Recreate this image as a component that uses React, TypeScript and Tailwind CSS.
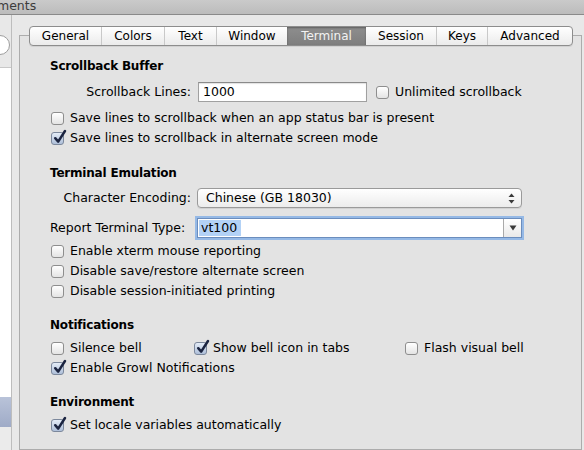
import React from 'react'

const TABS: { label: string; w: string }[] = [
  { label: 'General', w: 'w-[71px]' },
  { label: 'Colors', w: 'w-[63px]' },
  { label: 'Text', w: 'w-[52px]' },
  { label: 'Window', w: 'w-[71px]' },
  { label: 'Terminal', w: 'w-[79px]' },
  { label: 'Session', w: 'w-[70px]' },
  { label: 'Keys', w: 'w-[51px]' },
  { label: 'Advanced', w: 'w-[85px]' },
]

const SELECTED = 'Terminal'

function Check({ checked }: { checked?: boolean }) {
  return (
    <span
      className={
        checked
          ? 'relative inline-block w-[13px] h-[13px] shrink-0 rounded-[3px] border border-[#7c889c] bg-linear-to-b from-[#e4ecf7] to-[#aebfd9]'
          : 'relative inline-block w-[13px] h-[13px] shrink-0 rounded-[3px] border border-[#8e8e8e] bg-linear-to-b from-white to-[#e4e4e4]'
      }
    >
      {checked && (
        <svg className="absolute -top-[4px] left-[1px]" width="14" height="15" viewBox="0 0 14 15">
          <path
            d="M2.2 9.2 L5.2 12.6 L12 2"
            stroke="#1b2440"
            strokeWidth="2.5"
            fill="none"
            strokeLinecap="round"
            strokeLinejoin="round"
          />
        </svg>
      )}
    </span>
  )
}

function CheckRow({ label, checked, className = '' }: { label: string; checked?: boolean; className?: string }) {
  return (
    <div className={`h-[20px] flex items-center gap-[6px] pl-[1px] ${className}`}>
      <Check checked={checked} />
      <span>{label}</span>
    </div>
  )
}

function Header({ children, className = '' }: { children: React.ReactNode; className?: string }) {
  return <div className={`h-[16px] leading-[16px] font-bold text-[12px] tracking-[-0.2px] ${className}`}>{children}</div>
}

function TabStrip() {
  return (
    <div className="relative z-10 ml-[10px] flex h-[20px] w-fit rounded-[4px] border border-[#8d8d8d] bg-linear-to-b from-white to-[#ebebeb] shadow-[0_1px_0_rgba(0,0,0,0.08)] overflow-hidden text-[12px]">
      {TABS.map((t, i) => {
        const sel = t.label === SELECTED
        const prevSel = i > 0 && TABS[i - 1].label === SELECTED
        return (
          <div
            key={t.label}
            className={`${t.w} flex items-center justify-center leading-none ${
              sel
                ? 'bg-linear-to-b from-[#8e8e8e] to-[#7e7e7e] text-[#f3f3f3] shadow-[inset_0_1px_2px_rgba(0,0,0,0.35)]'
                : i > 0 && !prevSel
                ? 'border-l border-[#c9c9c9] text-black'
                : 'text-black'
            }`}
          >
            {t.label}
          </div>
        )
      })}
    </div>
  )
}

export default function App() {
  return (
    <div className="w-[584px] h-[450px] overflow-hidden flex flex-col bg-[#e8e8e8] font-['DejaVu_Sans','Liberation_Sans',sans-serif] text-[12.5px] text-black">
      {/* toolbar remnant */}
      <div className="h-[15px] shrink-0 border-b border-[#8a8a8a] bg-linear-to-b from-[#cacaca] to-[#bcbcbc] overflow-hidden">
        <div className="-ml-[3px] -mt-[2px] text-[12.5px] leading-[15px] text-[#3c3c3c]">ments</div>
      </div>

      <div className="flex flex-1 min-h-0">
        {/* left list pane */}
        <div className="w-[12px] shrink-0 flex flex-col border-r border-[#bdbdbd]">
          <div className="mt-[20px] h-[20px] w-[40px] -ml-[30px] rounded-full border border-[#9d9d9d] bg-white shrink-0" />
          <div className="mt-[12px] flex-1 flex flex-col border-t border-[#c8c8c8]">
            <div className="h-[329px] bg-white shrink-0" />
            <div className="h-[30px] shrink-0 bg-linear-to-b from-[#b9c3d9] to-[#9fabc7]" />
            <div className="flex-1 bg-[#ebebeb]" />
          </div>
        </div>

        {/* tab view */}
        <div className="ml-[7px] pt-[11px] flex flex-col">
          <TabStrip />
          <div className="-mt-[11px] w-[563px] flex-1 border border-[#acacac] bg-[#e3e3e3] pl-[30px] pt-[22px]">
            <Header>Scrollback Buffer</Header>
            <div className="mt-[8px] h-[20px] flex items-center">
              <span className="w-[141px] text-right">Scrollback Lines:</span>
              <div className="ml-[7px] w-[169px] h-[20px] border border-[#a0a0a0] border-t-[#8a8a8a] bg-white flex items-center pl-[4px] shadow-[inset_0_1px_1px_rgba(0,0,0,0.12)]">
                1000
              </div>
              <div className="ml-[9px] flex items-center gap-[6px]">
                <Check />
                <span>Unlimited scrollback</span>
              </div>
            </div>
            <CheckRow className="mt-[6px]" label="Save lines to scrollback when an app status bar is present" />
            <CheckRow checked label="Save lines to scrollback in alternate screen mode" />

            <Header className="mt-[17px]">Terminal Emulation</Header>
            <div className="mt-[7px] h-[20px] flex items-center">
              <span className="w-[141px] text-right">Character Encoding:</span>
              <div className="ml-[6px] w-[325px] h-[20px] rounded-[4px] border border-[#9a9a9a] bg-linear-to-b from-white to-[#ececec] shadow-[0_1px_0_rgba(0,0,0,0.08)] flex items-center pl-[8px] pr-[6px]">
                <span className="flex-1">Chinese (GB 18030)</span>
                <svg width="7" height="11" viewBox="0 0 7 11">
                  <path d="M3.5 0.5 L6.5 4 L0.5 4 Z" fill="#3a3a3a" />
                  <path d="M3.5 10.5 L6.5 7 L0.5 7 Z" fill="#3a3a3a" />
                </svg>
              </div>
            </div>
            <div className="mt-[10px] h-[20px] flex items-center">
              <span className="w-[141px]">Report Terminal Type:</span>
              <div className="ml-[6px] w-[325px] h-[20px] flex border border-[#6b8dbd] bg-white shadow-[0_0_0_2px_#95b9e6]">
                <div className="flex-1 flex items-center pl-[1px]">
                  <span className="bg-[#b3d2f6] h-[16px] leading-[16px] pl-[2px] pr-[4px]">vt100</span>
                </div>
                <div className="w-[18px] border-l border-[#a9a9a9] bg-linear-to-b from-white to-[#e9e9e9] flex items-center justify-center">
                  <svg width="8" height="6" viewBox="0 0 8 6">
                    <path d="M0.5 0.5 L7.5 0.5 L4 5.5 Z" fill="#3a3a3a" />
                  </svg>
                </div>
              </div>
            </div>
            <CheckRow className="mt-[3px]" label="Enable xterm mouse reporting" />
            <CheckRow label="Disable save/restore alternate screen" />
            <CheckRow label="Disable session-initiated printing" />

            <Header className="mt-[16px]">Notifications</Header>
            <div className="mt-[5px] flex">
              <CheckRow className="w-[143px]" label="Silence bell" />
              <CheckRow className="w-[211px]" checked label="Show bell icon in tabs" />
              <CheckRow label="Flash visual bell" />
            </div>
            <CheckRow checked label="Enable Growl Notifications" />

            <Header className="mt-[16px]">Environment</Header>
            <CheckRow className="mt-[5px]" checked label="Set locale variables automatically" />
          </div>
        </div>
      </div>
    </div>
  )
}
